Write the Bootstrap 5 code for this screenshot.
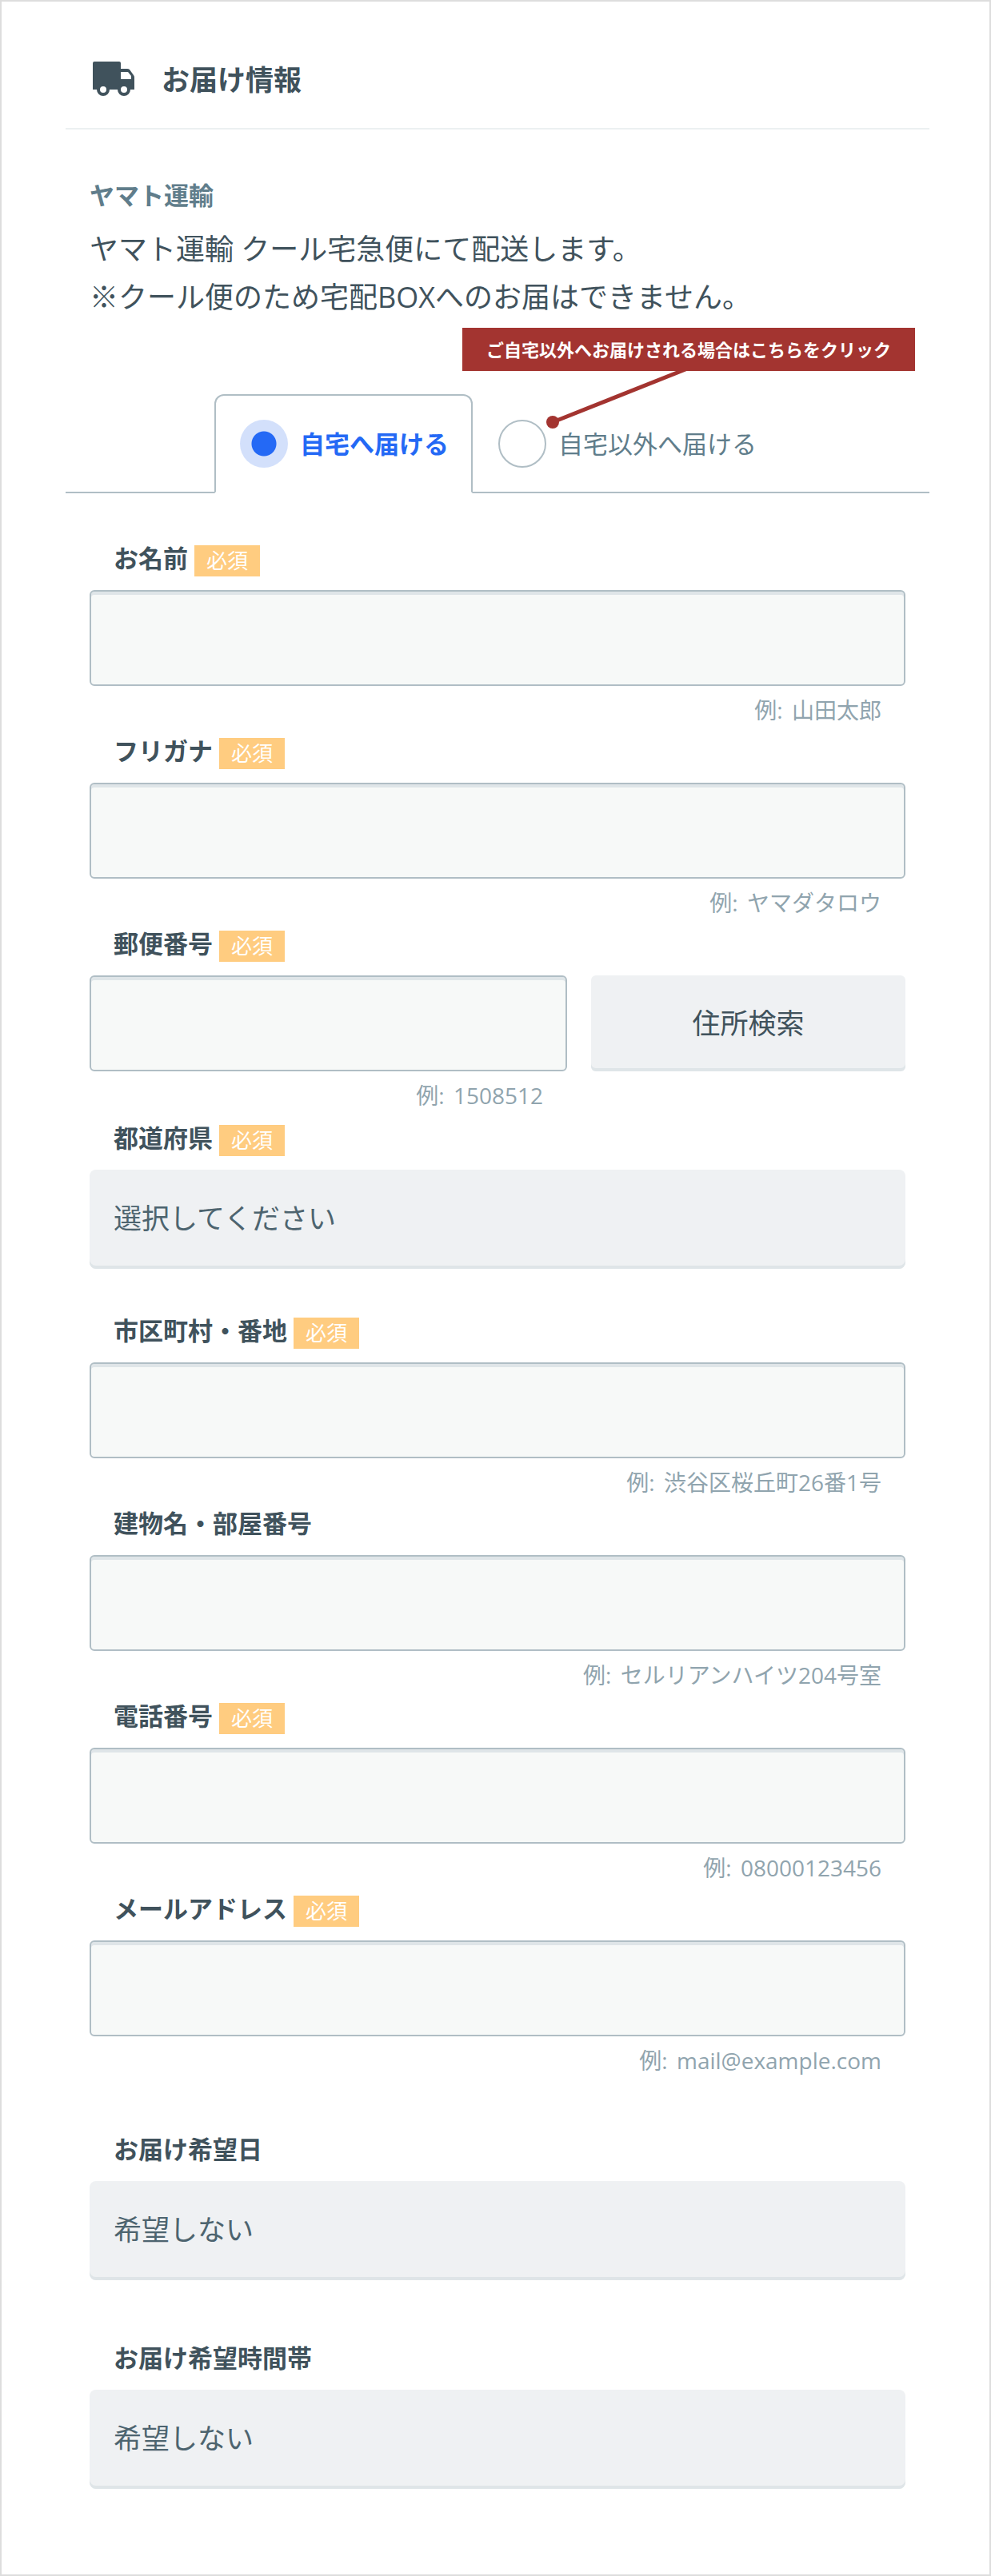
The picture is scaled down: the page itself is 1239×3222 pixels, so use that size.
<!DOCTYPE html>
<html lang="ja">
<head>
<meta charset="utf-8">
<meta name="viewport" content="width=device-width, initial-scale=1">
<title>お届け情報</title>
<link href="https://cdn.jsdelivr.net/npm/bootstrap@5.3.0/dist/css/bootstrap.min.css" rel="stylesheet">
<style>
:root { --ink: #40525c; --steel: #607d8b; --line: #b0bec5; --soft: #eff1f3; --edge: #dfe5e8; --blue: #2469f5; --red: #a33430; }
body { font-family: "Open Sans", "Noto Sans CJK JP", sans-serif; color: var(--ink); background: #fff; }
.sheet { border: 2px solid #ddd; padding: 0 75px 107px 80px; }
.inset { padding: 0 30px; }
.sheet-head { height: 160px; padding: 36px 32px 0 34px; border-bottom: 2px solid #ecf0f1; gap: 34px; }
.sheet-title { font-size: 35px; line-height: 50px; padding-top: 2px; }
.carrier { font-size: 31px; line-height: 44px; color: var(--steel); margin: 60px 0 16px; }
.note-text { font-size: 36px; line-height: 60px; margin-bottom: 91px; }
.dest-tabs { border-bottom: 2px solid var(--line); height: 124px; margin-bottom: 65px; }
.dest-tab { gap: 15px; padding: 0 28px 0 30px; height: 124px; border: 2px solid transparent; font-size: 31px; line-height: 44px; color: var(--steel); }
.dest-tab.current { background: #fff; border-color: var(--line) var(--line) #fff; border-radius: 12px 12px 0 0; color: var(--blue); }
.dest-tab .form-check-input { width: 60px; height: 60px; margin: 0; border: 2px solid var(--line); float: none; flex: none; }
.dest-tab .form-check-input:checked { border: 0; background: radial-gradient(circle, var(--blue) 15px, #d3e0fb 16px); }
.callout-tip { right: 18px; top: -83px; }
.callout-text { background: var(--red); color: #fff; font-size: 22px; line-height: 54px; padding: 0 30px; }
.callout-lead { left: 100px; top: 50px; }
.field-head { gap: 8px; height: 39px; margin-bottom: 17px; padding: 0 30px; }
.field-head label { font-size: 31px; line-height: 33px; font-weight: 700; }
.need { background: #ffcc80; color: #fff; font-size: 26px; line-height: 39px; padding: 0 15px; }
.field-box.form-control { height: 120px; border: 2px solid var(--line); border-radius: 6px; background: #f7f9f8; box-shadow: inset 0 4px 0 var(--edge); font-size: 36px; padding: 0 28px; color: var(--ink); }
.hint { font-size: 28px; line-height: 60px; padding: 0 30px 5px; color: #90a4ae; text-align: right; }
.field-pick.form-select { height: 124px; border: 0; border-radius: 8px; background: var(--soft) none; box-shadow: inset 0 -4px 0 var(--edge); font-size: 35px; padding: 0 30px 2px; color: #4d646f; }
.lookup.btn { height: 120px; border: 0; border-radius: 6px; background: var(--soft); box-shadow: inset 0 -4px 0 var(--edge); font-size: 35px; color: var(--ink); padding: 0; }
.zip-row { gap: 30px; margin-bottom: 2px; }
.zip-cell { flex: 597 1 0; }
.lookup-cell { flex: 393 1 0; }
.after-pick { margin-bottom: 61px; }
.after-mail { margin-bottom: 60px; }
.after-date { margin-bottom: 81px; }
</style>
</head>
<body>
<main class="sheet">
  <header class="sheet-head d-flex align-items-center">
    <svg class="flex-shrink-0" width="52" height="44" viewBox="0 0 52 44" aria-hidden="true">
      <path fill="#40525c" fill-rule="evenodd" d="M2 0h31a2 2 0 0 1 2 2v7h8q2 0 3 1l5 7q1 1 1 3v15H0V2q0-2 2-2zM35 13v9h13v-4l-4-5z"/>
      <g fill="#fff" stroke="#40525c" stroke-width="4"><circle cx="13" cy="35" r="6"/><circle cx="39" cy="35" r="6"/></g>
    </svg>
    <h1 class="sheet-title fw-bold mb-0">お届け情報</h1>
  </header>

  <section class="inset">
    <h2 class="carrier fw-bold">ヤマト運輸</h2>
    <p class="note-text">ヤマト運輸 クール宅急便にて配送します。<br>※クール便のため宅配BOXへのお届はできません。</p>
  </section>

  <form>
    <div class="dest-tabs position-relative d-flex justify-content-center" role="radiogroup" aria-label="お届け先">
      <label class="dest-tab current d-flex align-items-center fw-bold">
        <input class="form-check-input" type="radio" name="dest" checked>
        <span>自宅へ届ける</span>
      </label>
      <label class="dest-tab d-flex align-items-center">
        <input class="form-check-input" type="radio" name="dest">
        <span>自宅以外へ届ける</span>
      </label>
      <div class="callout-tip position-absolute">
        <svg class="callout-lead position-absolute" width="190" height="80" viewBox="0 0 190 80" aria-hidden="true">
          <path d="M13 68L184 0" stroke="#a33430" stroke-width="5"/>
          <circle cx="13" cy="68" r="8" fill="#a33430"/>
        </svg>
        <div class="callout-text position-relative fw-bold text-nowrap">ご自宅以外へお届けされる場合はこちらをクリック</div>
      </div>
    </div>

    <div class="inset">
      <div>
        <div class="field-head d-flex align-items-start"><label for="name">お名前</label><span class="need">必須</span></div>
        <input class="field-box form-control" id="name" type="text">
        <div class="hint"><span class="me-1">例:</span> 山田太郎</div>
      </div>
      <div>
        <div class="field-head d-flex align-items-start"><label for="kana">フリガナ</label><span class="need">必須</span></div>
        <input class="field-box form-control" id="kana" type="text">
        <div class="hint"><span class="me-1">例:</span> ヤマダタロウ</div>
      </div>
      <div>
        <div class="field-head d-flex align-items-start"><label for="zip">郵便番号</label><span class="need">必須</span></div>
        <div class="zip-row d-flex">
          <div class="zip-cell">
            <input class="field-box form-control" id="zip" type="text">
            <div class="hint"><span class="me-1">例:</span> 1508512</div>
          </div>
          <div class="lookup-cell"><button class="lookup btn w-100" type="button">住所検索</button></div>
        </div>
      </div>
      <div class="after-pick">
        <div class="field-head d-flex align-items-start"><label for="pref">都道府県</label><span class="need">必須</span></div>
        <select class="field-pick form-select" id="pref"><option>選択してください</option></select>
      </div>
      <div>
        <div class="field-head d-flex align-items-start"><label for="city">市区町村・番地</label><span class="need">必須</span></div>
        <input class="field-box form-control" id="city" type="text">
        <div class="hint"><span class="me-1">例:</span> 渋谷区桜丘町26番1号</div>
      </div>
      <div>
        <div class="field-head d-flex align-items-start"><label for="building">建物名・部屋番号</label></div>
        <input class="field-box form-control" id="building" type="text">
        <div class="hint"><span class="me-1">例:</span> セルリアンハイツ204号室</div>
      </div>
      <div>
        <div class="field-head d-flex align-items-start"><label for="tel">電話番号</label><span class="need">必須</span></div>
        <input class="field-box form-control" id="tel" type="tel">
        <div class="hint"><span class="me-1">例:</span> 08000123456</div>
      </div>
      <div class="after-mail">
        <div class="field-head d-flex align-items-start"><label for="mail">メールアドレス</label><span class="need">必須</span></div>
        <input class="field-box form-control" id="mail" type="email">
        <div class="hint"><span class="me-1">例:</span> mail@example.com</div>
      </div>
      <div class="after-date">
        <div class="field-head d-flex align-items-start"><label for="day">お届け希望日</label></div>
        <select class="field-pick form-select" id="day"><option>希望しない</option></select>
      </div>
      <div>
        <div class="field-head d-flex align-items-start"><label for="slot">お届け希望時間帯</label></div>
        <select class="field-pick form-select" id="slot"><option>希望しない</option></select>
      </div>
    </div>
  </form>
</main>
<script src="https://cdn.jsdelivr.net/npm/bootstrap@5.3.0/dist/js/bootstrap.bundle.min.js"></script>
</body>
</html>
